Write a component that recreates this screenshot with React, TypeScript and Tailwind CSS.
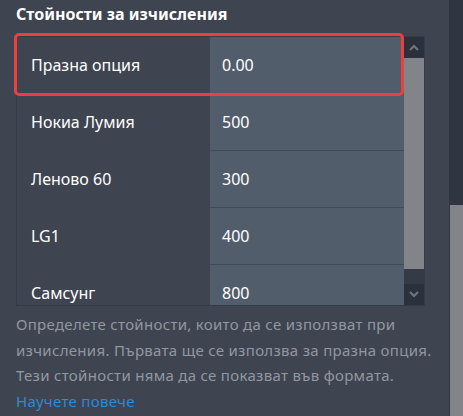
import React from "react";

const rows = [
  { label: "Празна опция", value: "0.00" },
  { label: "Нокиа Лумия", value: "500" },
  { label: "Леново 60", value: "300" },
  { label: "LG1", value: "400" },
  { label: "Самсунг", value: "800" },
];

export default function App() {
  return (
    <div
      className="w-[463px] h-[416px] bg-[#3e4450] flex overflow-hidden"
      style={{ fontFamily: '"Noto Sans", "Open Sans", sans-serif' }}
    >
      <div className="flex-1 flex flex-col pl-[16px] pr-[17px]">
        <div className="mt-[3px] h-[22px] text-[16px] font-bold text-white leading-[22px]">
          Стойности за изчисления
        </div>
        <div className="relative mt-[11px] w-[409px] border border-[#363c47] flex">
          <div className="h-[268px] w-[387px] overflow-hidden flex flex-col">
            {rows.map((r, i) => (
              <div key={i} className="flex h-[57px] shrink-0">
                <div className="w-[193px] flex items-center pl-[14px] text-[16px] text-white border-b border-[#3e4450]">
                  {r.label}
                </div>
                <div className="flex-1 flex items-center pl-[12px] text-[16px] text-white bg-[#525d6c] border-b border-[#434a55]">
                  {r.value}
                </div>
              </div>
            ))}
          </div>
          <div className="w-[20px] flex flex-col bg-[#353b46]">
            <div className="h-[21px] bg-[#2b313c] flex items-center justify-center">
              <svg width="10" height="7" viewBox="0 0 10 7">
                <path d="M1 6 L5 2 L9 6" fill="none" stroke="#6e747e" strokeWidth="2.2" />
              </svg>
            </div>
            <div className="h-[211px] bg-[#818589]" />
            <div className="flex-1" />
            <div className="h-[21px] bg-[#2b313c] flex items-center justify-center">
              <svg width="10" height="7" viewBox="0 0 10 7">
                <path d="M1 1 L5 5 L9 1" fill="none" stroke="#6e747e" strokeWidth="2.2" />
              </svg>
            </div>
          </div>
          <div className="absolute left-[-3px] top-[-4px] w-[390px] h-[63px] border-[3px] border-[#ef3e3e] rounded-[5px]" />
        </div>
        <div className="mt-[6px] text-[15px] tracking-[0.3px] leading-[25.5px] text-[#9198a1] whitespace-nowrap">
          <div>Определете стойности, които да се използват при</div>
          <div>изчисления. Първата ще се използва за празна опция.</div>
          <div>Тези стойности няма да се показват във формата.</div>
        </div>
        <div className="text-[15px] tracking-[0.3px] leading-[25.5px] text-[#2f8ad3]">Научете повече</div>
      </div>
      <div className="w-[21px] bg-[#2f3541] flex flex-col">
        <div className="h-[205px]" />
        <div className="flex-1 ml-[1px] w-[19px] bg-[#818589]" />
      </div>
    </div>
  );
}
